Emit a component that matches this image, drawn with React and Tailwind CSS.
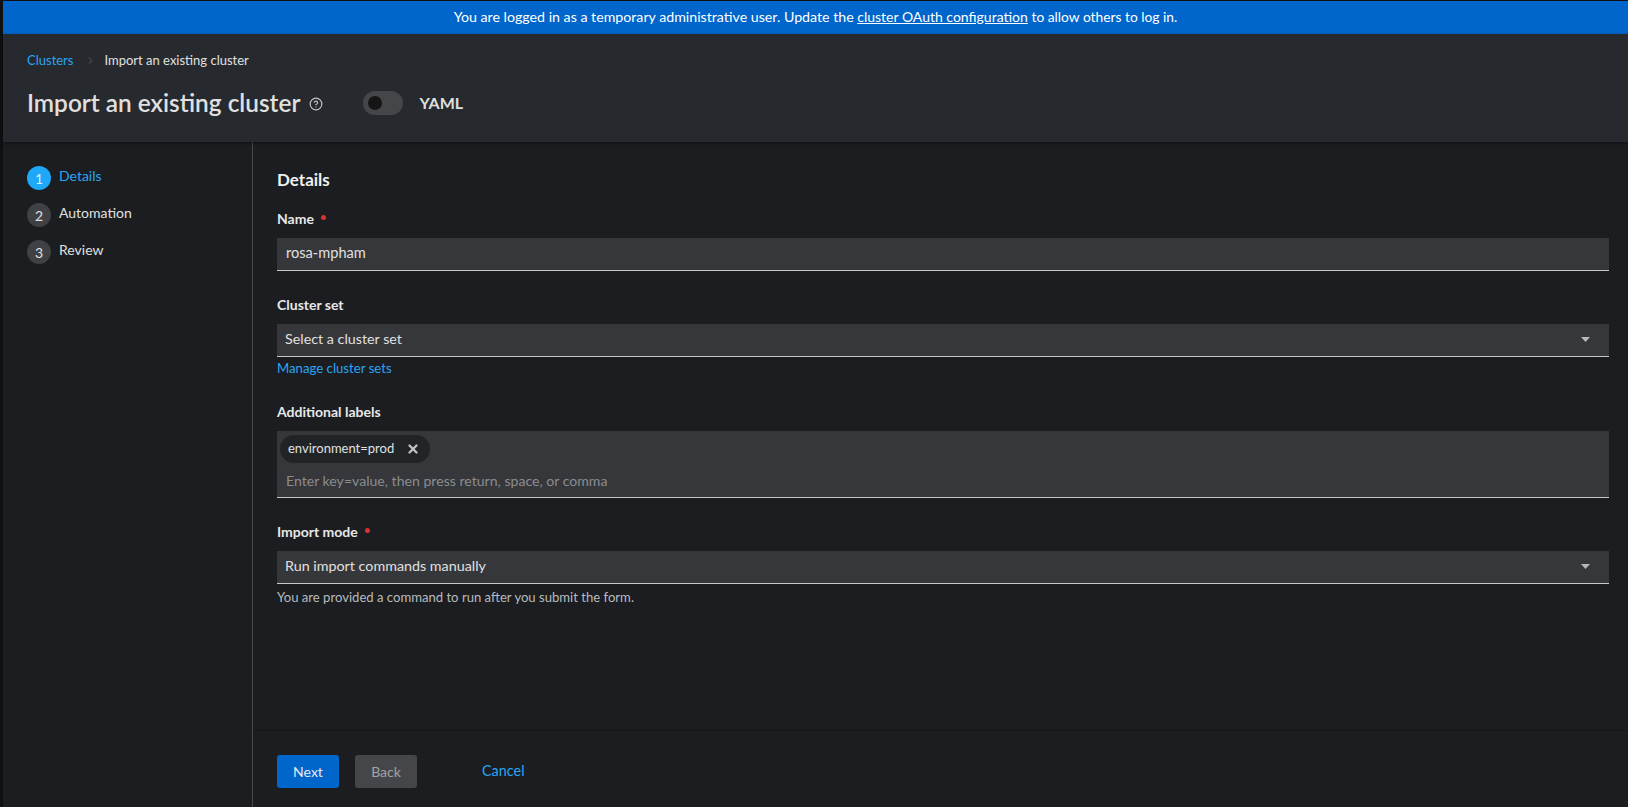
import React from "react";
import { ChevronRight, X, CircleHelp } from "lucide-react";

const steps = [
  { n: 1, label: "Details", active: true },
  { n: 2, label: "Automation" },
  { n: 3, label: "Review" },
];

function Label({ children, required }) {
  return (
    <div className="flex h-5 items-center text-[14px] font-bold leading-5 text-[#e8e8e8]">
      {children}
      {required && <span className="ml-[7px] -mt-[3px] h-[5px] w-[5px] rounded-full bg-[#e0302f]" />}
    </div>
  );
}

function Select({ value }) {
  return (
    <div className="mt-[9px] flex h-[33px] items-center justify-between border-b border-[#c7c7c7] bg-[#36373b] pb-[2px] pl-2 pr-[19px] text-[14.3px] text-[#e0e0e0]">
      <span>{value}</span>
      <svg width="9" height="5" viewBox="0 0 9 5" className="fill-[#b8b8b8]">
        <path d="M0 0h9L4.5 5z" />
      </svg>
    </div>
  );
}

export default function App() {
  return (
    <div className="flex h-screen flex-col overflow-hidden bg-[#0f1011] pl-[3px] pt-px font-['Lato',sans-serif]">
      {/* Banner */}
      <div className="flex h-[33px] shrink-0 items-center justify-center bg-[#0066cc] pb-[2px] text-[14px] text-white">
        <span>
          <span className="text-[14.2px]">You are logged in as a temporary administrative user. Update the</span>{" "}
          <a className="underline">cluster OAuth configuration</a>{" "}
          <span className="text-[13.8px]">to allow others to log in.</span>
        </span>
      </div>

      {/* Page header */}
      <div className="z-10 h-[108px] shrink-0 bg-[#26292d] pl-6 shadow-[0_1px_3px_rgba(0,0,0,0.5)]">
        <div className="flex items-center pt-4 text-[13px] leading-5">
          <span className="text-[#2aa5f4]">Clusters</span>
          <ChevronRight size={11} strokeWidth={2} className="ml-3 mr-2 text-[#5c5f63]" />
          <span className="text-[#e0e0e0]">Import an existing cluster</span>
        </div>
        <div className="mt-[17px] flex items-center">
          <h1 className="text-[24.4px] font-semibold leading-8 text-[#e0e0e0]">Import an existing cluster</h1>
          <CircleHelp size={14} strokeWidth={2} className="ml-[9px] mt-px text-[#c2c2c2]" />
          <div className="ml-10 flex h-6 w-10 items-center rounded-full bg-[#45464a] pl-[5px]">
            <div className="h-[14px] w-[14px] rounded-full bg-[#151515]" />
          </div>
          <span className="ml-4 text-[16px] font-bold text-[#e0e0e0]">YAML</span>
        </div>
      </div>

      <div className="flex min-h-0 flex-1 bg-[#1b1d21]">
        {/* Wizard nav */}
        <nav className="flex w-[250px] shrink-0 flex-col gap-[13px] border-r border-[#48494d] pl-6 pt-6">
          {steps.map((s) => (
            <div key={s.n} className="flex h-6 items-start gap-2">
              <div
                className={`flex h-6 w-6 items-center justify-center rounded-full text-[14px] ${
                  s.active ? "bg-[#1fa7f8] text-[#d8eeff]" : "bg-[#3f4145] text-[#e0e0e0]"
                }`}
              >
                {s.n}
              </div>
              <span className={`text-[14px] leading-5 ${s.active ? "text-[#2aa5f4]" : "text-[#e0e0e0]"}`}>
                {s.label}
              </span>
            </div>
          ))}
        </nav>

        {/* Main column */}
        <div className="flex min-w-0 flex-1 flex-col">
          <main className="flex-1 pl-6 pr-[19px] pt-[26px]">
            <h2 className="text-[17px] font-bold leading-6 text-[#f0f0f0]">Details</h2>

            <div className="mt-[17px]">
              <Label required>Name</Label>
              <div className="mt-[9px] flex h-[33px] items-center border-b border-[#c7c7c7] bg-[#36373b] pb-[2px] pl-[9px] text-[14.6px] text-[#e0e0e0]">
                rosa-mpham
              </div>
            </div>

            <div className="mt-6">
              <Label>Cluster set</Label>
              <Select value="Select a cluster set" />
              <div className="mt-[1px] text-[13.2px] leading-5 text-[#2aa5f4]">Manage cluster sets</div>
            </div>

            <div className="mt-6">
              <Label>Additional labels</Label>
              <div className="mt-[9px] h-[67px] border-b border-[#c7c7c7] bg-[#36373b] pl-[3px] pt-1">
                <div className="flex h-7 w-[150px] items-center rounded-full bg-[#212427] pl-2 text-[13px] text-[#e0e0e0]">
                  environment=prod
                  <X size={14} strokeWidth={4} className="ml-3 text-[#c2c2c2]" />
                </div>
                <div className="ml-[6px] mt-2 text-[14.1px] leading-5 text-[#8a8d90]">
                  Enter key=value, then press return, space, or comma
                </div>
              </div>
            </div>

            <div className="mt-6">
              <Label required>Import mode</Label>
              <Select value="Run import commands manually" />
              <div className="mt-[3px] text-[13.1px] leading-5 text-[#b8bbbe]">
                You are provided a command to run after you submit the form.
              </div>
            </div>
          </main>

          {/* Footer */}
          <footer className="flex h-[77px] shrink-0 items-start border-t border-[#15161a] pl-6 pt-6">
            <button className="h-[33px] w-[62px] rounded-[3px] bg-[#0066cc] text-[14px] text-[#e8e8e8]">Next</button>
            <button className="ml-4 h-[33px] w-[62px] rounded-[3px] bg-[#45464a] text-[14px] text-[#a3a3a3]">Back</button>
            <span className="ml-[65px] self-start pt-[6px] text-[14.4px] leading-5 text-[#2aa5f4]">Cancel</span>
          </footer>
        </div>
      </div>
    </div>
  );
}
